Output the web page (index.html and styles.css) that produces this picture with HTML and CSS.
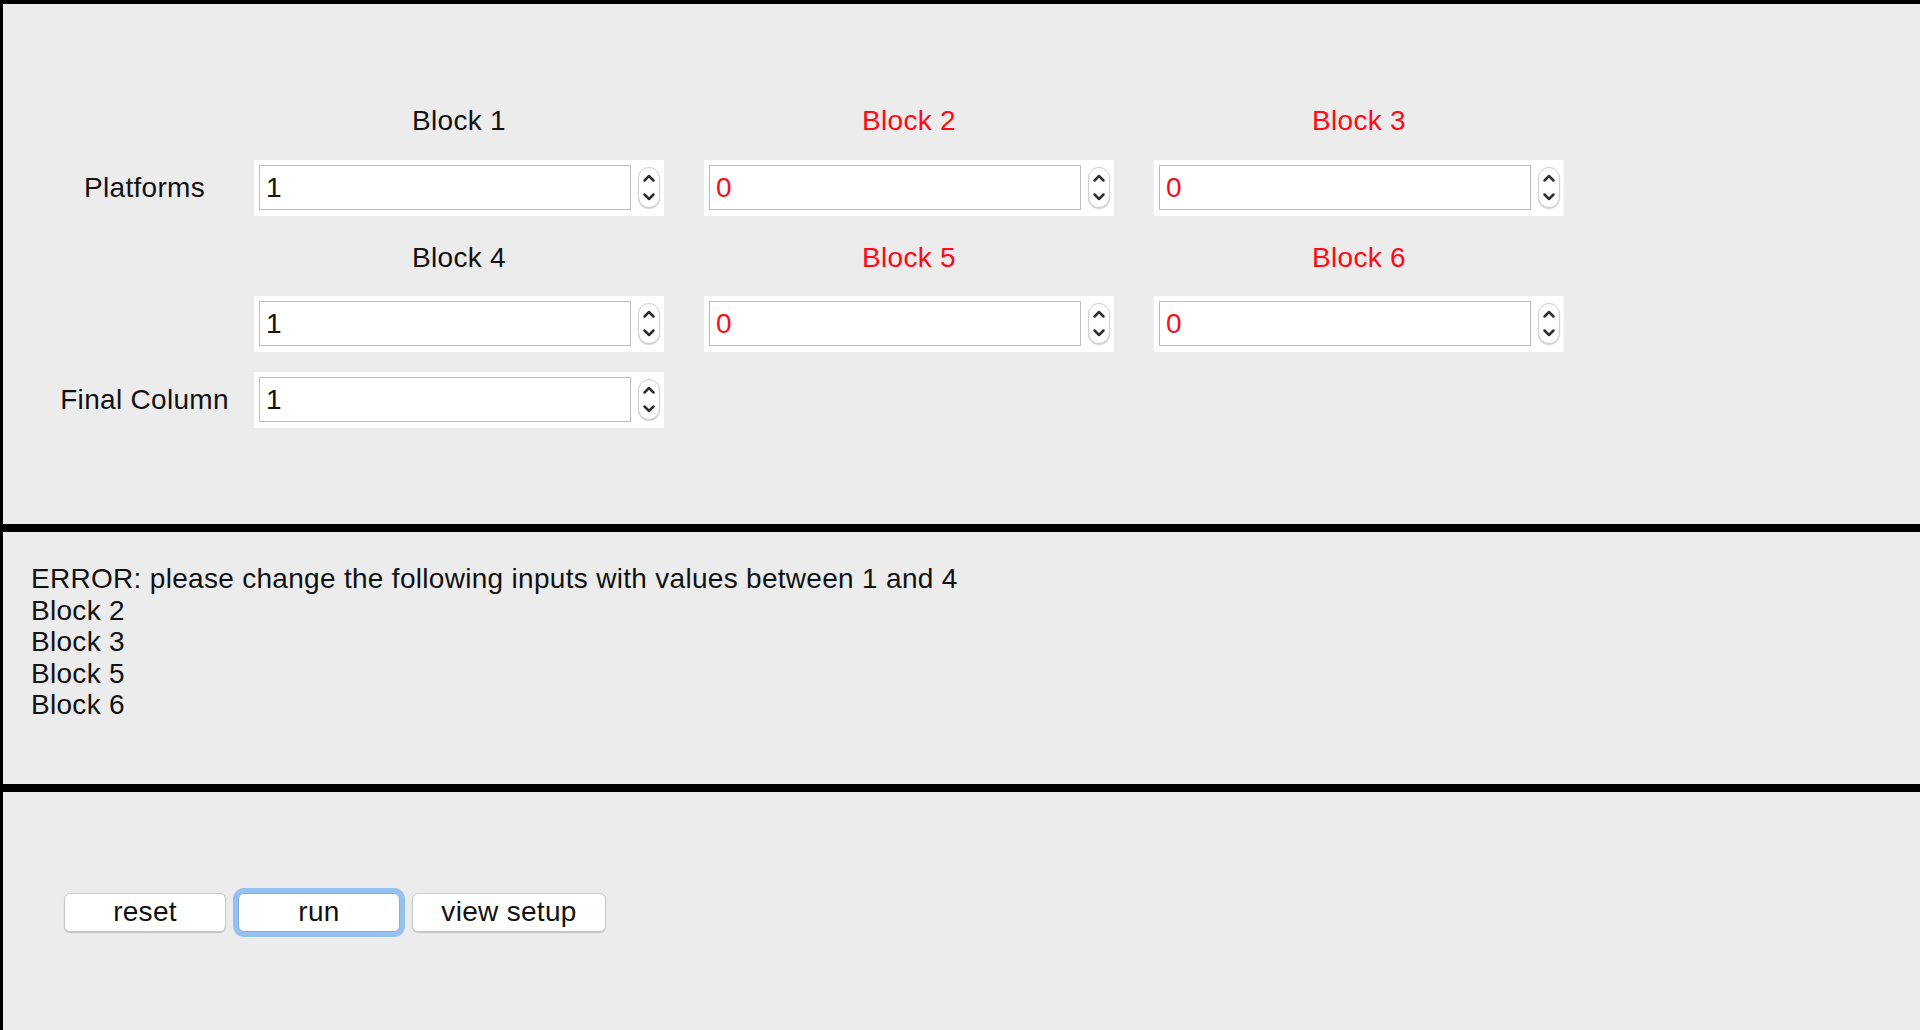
FILE: index.html
```html
<!DOCTYPE html>
<html lang="en">
<head>
<meta charset="utf-8">
<title>Blocks</title>
<link rel="stylesheet" href="styles.css">
</head>
<body>
<div class="window">
  <section class="panel inputs">
    <div class="grid">
      <div class="lbl"></div>
      <div class="head first">Block 1</div>
      <div class="head first bad">Block 2</div>
      <div class="head first bad">Block 3</div>

      <div class="rowlbl">Platforms</div>
      <div class="spin"><input class="field" type="text" value="1"><span class="arrows"><svg width="22" height="41" viewBox="0 0 22 41"><path d="M6.5 13.5 L11 9 L15.5 13.5 M6.5 27.5 L11 32 L15.5 27.5"/></svg></span></div>
      <div class="spin"><input class="field bad" type="text" value="0"><span class="arrows"><svg width="22" height="41" viewBox="0 0 22 41"><path d="M6.5 13.5 L11 9 L15.5 13.5 M6.5 27.5 L11 32 L15.5 27.5"/></svg></span></div>
      <div class="spin"><input class="field bad" type="text" value="0"><span class="arrows"><svg width="22" height="41" viewBox="0 0 22 41"><path d="M6.5 13.5 L11 9 L15.5 13.5 M6.5 27.5 L11 32 L15.5 27.5"/></svg></span></div>

      <div class="lbl"></div>
      <div class="head">Block 4</div>
      <div class="head bad">Block 5</div>
      <div class="head bad">Block 6</div>

      <div class="rowlbl"></div>
      <div class="spin"><input class="field" type="text" value="1"><span class="arrows"><svg width="22" height="41" viewBox="0 0 22 41"><path d="M6.5 13.5 L11 9 L15.5 13.5 M6.5 27.5 L11 32 L15.5 27.5"/></svg></span></div>
      <div class="spin"><input class="field bad" type="text" value="0"><span class="arrows"><svg width="22" height="41" viewBox="0 0 22 41"><path d="M6.5 13.5 L11 9 L15.5 13.5 M6.5 27.5 L11 32 L15.5 27.5"/></svg></span></div>
      <div class="spin"><input class="field bad" type="text" value="0"><span class="arrows"><svg width="22" height="41" viewBox="0 0 22 41"><path d="M6.5 13.5 L11 9 L15.5 13.5 M6.5 27.5 L11 32 L15.5 27.5"/></svg></span></div>

      <div class="rowlbl last">Final Column</div>
      <div class="spin last"><input class="field" type="text" value="1"><span class="arrows"><svg width="22" height="41" viewBox="0 0 22 41"><path d="M6.5 13.5 L11 9 L15.5 13.5 M6.5 27.5 L11 32 L15.5 27.5"/></svg></span></div>
    </div>
  </section>

  <section class="panel errors">
    <p>ERROR: please change the following inputs with values between 1 and 4</p>
    <p>Block 2</p>
    <p>Block 3</p>
    <p>Block 5</p>
    <p>Block 6</p>
  </section>

  <section class="panel actions">
    <button class="btn reset">reset</button>
    <button class="btn run">run</button>
    <button class="btn setup">view setup</button>
  </section>
</div>
</body>
</html>
```

FILE: styles.css
```css
* { box-sizing: border-box; }

html, body {
  margin: 0;
  padding: 0;
  background: #ececec;
}

body {
  font-family: "Liberation Sans", Arial, sans-serif;
  font-size: 28px;
  letter-spacing: 0.3px;
  color: #111;
}

.window {
  height: 1030px;
  border-top: 4px solid #000;
  border-left: 3px solid #000;
  display: flex;
  flex-direction: column;
}

.panel {
  background: #ececec;
}

.inputs {
  height: 528px;
  flex: none;
  border-bottom: 8px solid #000;
  padding: 0 0 0 32px;
}

.grid {
  display: grid;
  grid-template-columns: 219px 410px 450px 450px;
  grid-template-rows: 56px 56px 80px 56px 76px;
  padding-top: 100px;
}

.head {
  width: 410px;
  justify-self: end;
  align-self: end;
  text-align: center;
  line-height: 32px;
  margin-bottom: 22px;
}

.head.first {
  margin-bottom: 23px;
}

.bad {
  color: #ff0a16;
}

.rowlbl {
  align-self: center;
  text-align: center;
  line-height: 32px;
}

.rowlbl.last {
  align-self: end;
  margin-bottom: 12px;
}

.spin {
  width: 410px;
  height: 56px;
  justify-self: end;
  background: #fff;
  display: flex;
  align-items: center;
  gap: 7px;
  padding: 0 4px 1px 5px;
}

.spin.last {
  align-self: end;
}

.field {
  width: 372px;
  height: 45px;
  border: 1px solid #bcbcbc;
  background: #fff;
  font: inherit;
  letter-spacing: 0.3px;
  color: #111;
  padding: 0 0 0 6px;
  margin: 0;
  outline: none;
}

.field.bad {
  color: #ff0a16;
}

.arrows {
  width: 22px;
  height: 41px;
  border: 1px solid #cfcfcf;
  border-radius: 11px;
  background: #fff;
  box-shadow: 0 1px 1px rgba(0, 0, 0, 0.18);
  display: flex;
  align-items: center;
  justify-content: center;
  flex: none;
}

.arrows svg {
  display: block;
  margin: -1px;
}

.arrows path {
  fill: none;
  stroke: #2e2e2e;
  stroke-width: 2.5;
  stroke-linecap: round;
  stroke-linejoin: round;
}

.errors {
  height: 260px;
  flex: none;
  border-bottom: 8px solid #000;
  padding: 31px 0 0 28px;
}

.errors p {
  margin: 0;
  line-height: 31.6px;
  color: #111;
}

.actions {
  flex: 1;
  display: flex;
  align-items: flex-start;
  gap: 12px;
  padding: 101px 0 0 61px;
}

.btn {
  height: 39px;
  background: #fff;
  border: 1px solid #c8c8c8;
  border-radius: 6px;
  box-shadow: 0 1px 1px rgba(0, 0, 0, 0.18);
  font: inherit;
  letter-spacing: 0.3px;
  color: #111;
  line-height: 36px;
  padding: 0 0 1px 0;
  margin: 0;
}

.reset { width: 162px; }
.setup { width: 194px; }

.run {
  width: 162px;
  border-color: #7eaee8;
  box-shadow: 0 0 0 5px #95c1f0;
}
```
